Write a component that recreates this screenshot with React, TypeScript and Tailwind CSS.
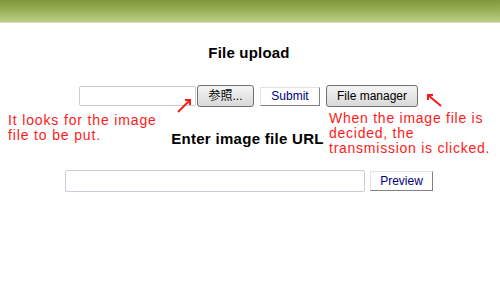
import React from "react";

const sans = { fontFamily: '"Liberation Sans", Arial, sans-serif' };

export default function App() {
  return (
    <div
      className="relative w-[500px] h-[300px] overflow-hidden bg-white"
      style={sans}
    >
      <div className="h-[22px] bg-gradient-to-b from-[#7f983a] via-[#9bb25a] to-[#bdce88]" />
      <div className="h-px bg-[#d6e0b4]" />

      <h1 className="mt-[21px] text-center text-[15px] leading-[18px] font-bold text-black pr-[2px] tracking-[0.2px]">
        File upload
      </h1>

      <div className="mt-[23px] flex items-center pl-[79px] h-[22px]">
        <input
          type="text"
          className="w-[117px] h-[20px] border border-[#c9cdd6] rounded-[2px] bg-white outline-none"
        />
        <button className="ml-[1px] w-[57px] h-[22px] rounded-[3px] border border-[#707070] bg-gradient-to-b from-[#f4f4f4] to-[#d9d9d9] text-[12px] leading-none text-black" style={{ fontFamily: '"Liberation Sans", "Noto Sans CJK JP", sans-serif' }}>
          参照...
        </button>
        <button className="ml-[6px] w-[60px] h-[19px] border border-t-[#e4e4e4] border-l-[#e4e4e4] border-r-[#808080] border-b-[#808080] bg-white text-[12px] leading-none text-[#000080]">
          Submit
        </button>
        <button className="ml-[6px] w-[92px] h-[22px] rounded-[3px] border border-[#707070] bg-gradient-to-b from-[#f4f4f4] to-[#d9d9d9] text-[12px] leading-none text-black">
          File manager
        </button>
      </div>

      <p className="mt-[23px] text-center text-[15px] leading-[18px] font-bold text-black pr-[5px] tracking-[0.3px]">
        Enter image file URL
      </p>

      <div className="mt-[22px] flex items-center pl-[65px] h-[22px]">
        <input
          type="text"
          className="w-[300px] h-[22px] border border-[#c9cdd6] rounded-[2px] bg-white outline-none"
        />
        <button className="ml-[5px] w-[63px] h-[20px] border border-t-[#e4e4e4] border-l-[#e4e4e4] border-r-[#808080] border-b-[#808080] bg-white text-[12px] leading-none text-[#000080]">
          Preview
        </button>
      </div>

      {/* annotations */}
      <div className="absolute left-[8px] top-[113px] text-[14px] leading-[15px] tracking-[0.85px] text-[#ff1a1a]">
        It looks for the image
        <br />
        file to be put.
      </div>
      <div className="absolute left-[329px] top-[111px] text-[14px] leading-[15px] tracking-[0.75px] text-[#ff1a1a]">
        When the image file is
        <br />
        decided, the
        <br />
        transmission is clicked.
      </div>

      <svg className="absolute left-[174px] top-[97px]" width="20" height="18" viewBox="0 0 20 18">
        <path d="M4 15 L16 3" stroke="#ff1a1a" strokeWidth="2" fill="none" />
        <path d="M11 3 L16 3 L16 8" stroke="#ff1a1a" strokeWidth="2" fill="none" />
      </svg>
      <svg className="absolute left-[424px] top-[91px]" width="22" height="18" viewBox="0 0 22 18">
        <path d="M4 4 L17 15" stroke="#ff1a1a" strokeWidth="2" fill="none" />
        <path d="M9 4 L4 4 L4 9" stroke="#ff1a1a" strokeWidth="2" fill="none" />
      </svg>
    </div>
  );
}
